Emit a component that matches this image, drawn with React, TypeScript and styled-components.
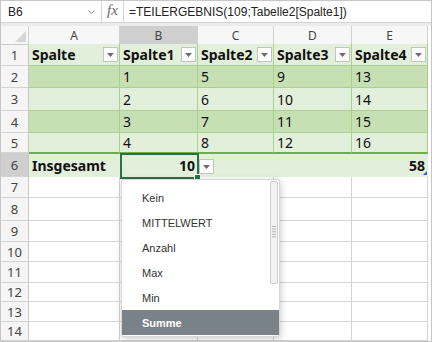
import React from "react";
import styled, { createGlobalStyle } from "styled-components";

const Global = createGlobalStyle`
  html, body { margin: 0; padding: 0; background: #fff; }
  #root { width: 432px; height: 342px; }
`;

const COLS = "28px 91px 78px 76px 78px 76px 1fr";

const Frame = styled.div`
  position: relative;
  width: 432px;
  height: 342px;
  box-sizing: border-box;
  border: 1px solid #c6c6c6;
  overflow: hidden;
  background: #fff;
  font-family: "Noto Sans", "Open Sans", sans-serif;
`;

const FormulaBar = styled.div`
  display: flex;
  height: 22px;
  box-sizing: border-box;
  border-bottom: 1px solid #d4d4d4;
  font-family: "Liberation Sans", Arial, sans-serif;
  font-size: 12px;
  color: #222;
`;

const NameBox = styled.div`
  width: 101px;
  box-sizing: border-box;
  display: flex;
  align-items: center;
  justify-content: space-between;
  padding: 0 6px 0 7px;
  border-right: 1px solid #d4d4d4;
`;

const FxBox = styled.div`
  width: 22px;
  box-sizing: border-box;
  display: flex;
  align-items: center;
  justify-content: center;
  border-right: 1px solid #d4d4d4;
  font-family: "Liberation Serif", "Times New Roman", serif;
  font-style: italic;
  font-size: 15px;
  color: #6a6a6a;
  padding-bottom: 2px;
`;

const FormulaText = styled.div`
  display: flex;
  align-items: center;
  padding-left: 5px;
  white-space: nowrap;
`;

const Band = styled.div`
  height: 3px;
  background: #ececec;
`;

const Row = styled.div<{ $h: number }>`
  display: grid;
  grid-template-columns: ${COLS};
  height: ${(p) => p.$h}px;
`;

const ColHead = styled.div<{ $active?: boolean }>`
  box-sizing: border-box;
  display: flex;
  align-items: center;
  justify-content: center;
  background: ${(p) => (p.$active ? "#cfcfcf" : "#f7f7f7")};
  border-right: 1px solid #d0d0d0;
  border-bottom: 1px solid #c8c8c8;
  font-size: 12px;
  padding-top: 1px;
  color: #444;
  position: relative;
`;

const RowHead = styled.div<{ $active?: boolean }>`
  box-sizing: border-box;
  display: flex;
  align-items: center;
  justify-content: center;
  background: ${(p) => (p.$active ? "#cfcfcf" : "#f5f5f5")};
  border-right: 1px solid #c8c8c8;
  border-bottom: 1px solid #d4d4d4;
  font-size: 13px;
  color: #444;
`;

type Tone = "head" | "light" | "dark" | "total" | "empty";

const bg: Record<Tone, string> = {
  head: "#e2efda",
  light: "#e2efda",
  dark: "#c6e0b4",
  total: "#e2efda",
  empty: "#ffffff",
};

const Cell = styled.div<{ $tone: Tone; $right?: boolean; $bold?: boolean; $edge?: boolean }>`
  position: relative;
  box-sizing: border-box;
  display: flex;
  align-items: center;
  justify-content: ${(p) => (p.$right ? "flex-end" : "space-between")};
  padding: ${(p) => (p.$right ? "0 3px 0 3px" : "0 1px 0 3px")};
  background: ${(p) => bg[p.$tone]};
  border-right: ${(p) =>
    p.$tone === "total"
      ? "none"
      : p.$tone === "empty"
      ? "1px solid #d4d4d4"
      : "1px solid #a9d08e"};
  border-bottom: ${(p) =>
    p.$edge
      ? "1px solid #70ad47"
      : p.$tone === "empty"
      ? "1px solid #d4d4d4"
      : p.$tone === "total"
      ? "none"
      : "1px solid #a9d08e"};
  border-top: ${(p) => (p.$tone === "total" ? "1px solid #70ad47" : "none")};
  font-size: 14px;
  font-weight: ${(p) => (p.$bold ? 700 : 400)};
  color: #111;
  white-space: nowrap;
`;

const Tail = styled.div`
  background: #fff;
`;

const FilterBtn = styled.span`
  width: 15px;
  height: 15px;
  box-sizing: border-box;
  border: 1px solid #c4c4c4;
  background: #fff;
  display: flex;
  align-items: center;
  justify-content: center;
  flex: none;
`;

const TotalBtn = styled(FilterBtn)`
  position: absolute;
  left: calc(100% + 1px);
  top: 5px;
  z-index: 3;
`;

const Selection = styled.span`
  position: absolute;
  left: 0;
  top: -1px;
  right: -1px;
  bottom: -2px;
  border: 2px solid #2a7148;
  pointer-events: none;
  z-index: 2;
`;

const Handle = styled.span`
  position: absolute;
  right: -3px;
  bottom: -3px;
  width: 5px;
  height: 5px;
  background: #2a7148;
  border: 1px solid #fff;
  border-right: none;
  border-bottom: none;
`;

const CornerMark = styled.span`
  position: absolute;
  right: 1px;
  bottom: 2px;
  width: 0;
  height: 0;
  border-left: 4px solid transparent;
  border-bottom: 4px solid #3b5fc4;
`;

const Popup = styled.div`
  position: absolute;
  left: 120px;
  top: 178px;
  width: 159px;
  height: 158px;
  box-sizing: border-box;
  background: #fff;
  border: 1px solid #d6d6d6;
  border-radius: 2px;
  box-shadow: 1px 2px 7px rgba(0, 0, 0, 0.2);
  padding-top: 5px;
  font-family: "Liberation Sans", Arial, sans-serif;
  font-size: 11px;
  color: #333;
  z-index: 5;
`;

const Item = styled.div<{ $selected?: boolean }>`
  height: 25px;
  display: flex;
  align-items: center;
  padding-left: 20px;
  background: ${(p) => (p.$selected ? "#7a8289" : "transparent")};
  color: ${(p) => (p.$selected ? "#fff" : "#333")};
  font-weight: ${(p) => (p.$selected ? 700 : 400)};
`;

const Thumb = styled.div`
  position: absolute;
  left: 148px;
  top: 1px;
  width: 8px;
  height: 103px;
  box-sizing: border-box;
  border: 1px solid #cdcdcd;
  border-radius: 2px;
  background: #f2f2f2;
  display: flex;
  align-items: center;
  justify-content: center;
`;

const Tri = () => (
  <svg width="7" height="4" viewBox="0 0 7 4">
    <path d="M0 0 H7 L3.5 4 Z" fill="#6e6e6e" />
  </svg>
);

const Chevron = () => (
  <svg width="7" height="4" viewBox="0 0 7 4">
    <path d="M0.5 0.5 L3.5 3.5 L6.5 0.5" stroke="#8a8a8a" fill="none" strokeWidth="1" />
  </svg>
);

const CornerTri = styled.svg`
  position: absolute;
  right: 2px;
  bottom: 2px;
`;

const rowHeights = [22, 22, 23, 22, 20, 24, 21, 23, 21, 20, 21, 19, 20, 19];
const letters = ["A", "B", "C", "D", "E"];

const body: (string | number)[][] = [
  ["", 1, 5, 9, 13],
  ["", 2, 6, 10, 14],
  ["", 3, 7, 11, 15],
  ["", 4, 8, 12, 16],
];

const items = ["Kein", "MITTELWERT", "Anzahl", "Max", "Min", "Summe"];

export default function App() {
  return (
    <>
      <Global />
      <Frame>
        <FormulaBar>
          <NameBox>
            <span>B6</span>
            <Chevron />
          </NameBox>
          <FxBox>fx</FxBox>
          <FormulaText>=TEILERGEBNIS(109;Tabelle2[Spalte1])</FormulaText>
        </FormulaBar>
        <Band />
        <Row $h={18}>
          <ColHead>
            <CornerTri width="11" height="11" viewBox="0 0 11 11">
              <path d="M11 0 V11 H0 Z" fill="#d6d6d6" />
            </CornerTri>
          </ColHead>
          {letters.map((l) => (
            <ColHead key={l} $active={l === "B"}>
              {l}
            </ColHead>
          ))}
          <Tail />
        </Row>

        <Row $h={rowHeights[0]}>
          <RowHead>1</RowHead>
          {["Spalte", "Spalte1", "Spalte2", "Spalte3", "Spalte4"].map((h) => (
            <Cell key={h} $tone="head" $bold>
              <span>{h}</span>
              <FilterBtn>
                <Tri />
              </FilterBtn>
            </Cell>
          ))}
          <Tail />
        </Row>

        {body.map((r, i) => (
          <Row key={i} $h={rowHeights[i + 1]}>
            <RowHead>{i + 2}</RowHead>
            {r.map((v, j) => (
              <Cell key={j} $tone={i % 2 === 0 ? "dark" : "light"} $edge={i === 3}>
                {v}
              </Cell>
            ))}
            <Tail />
          </Row>
        ))}

        <Row $h={rowHeights[5]}>
          <RowHead $active>6</RowHead>
          <Cell $tone="total" $bold>
            Insgesamt
          </Cell>
          <Cell $tone="total" $bold $right>
            10
            <Selection>
              <Handle />
            </Selection>
            <TotalBtn>
              <Tri />
            </TotalBtn>
          </Cell>
          <Cell $tone="total" />
          <Cell $tone="total" />
          <Cell $tone="total" $bold $right>
            58
            <CornerMark />
          </Cell>
          <Tail />
        </Row>

        {rowHeights.slice(6).map((h, i) => (
          <Row key={i} $h={h}>
            <RowHead>{i + 7}</RowHead>
            {letters.map((l) => (
              <Cell key={l} $tone="empty" />
            ))}
            <Tail />
          </Row>
        ))}

        <Popup>
          {items.map((t) => (
            <Item key={t} $selected={t === "Summe"}>
              {t}
            </Item>
          ))}
          <Thumb>
            <svg width="4" height="13" viewBox="0 0 4 13">
              {[0, 1, 2, 3, 4].map((k) => (
                <rect key={k} x="0" y={k * 2.6} width="4" height="1" fill="#b5b5b5" />
              ))}
            </svg>
          </Thumb>
        </Popup>
      </Frame>
    </>
  );
}
